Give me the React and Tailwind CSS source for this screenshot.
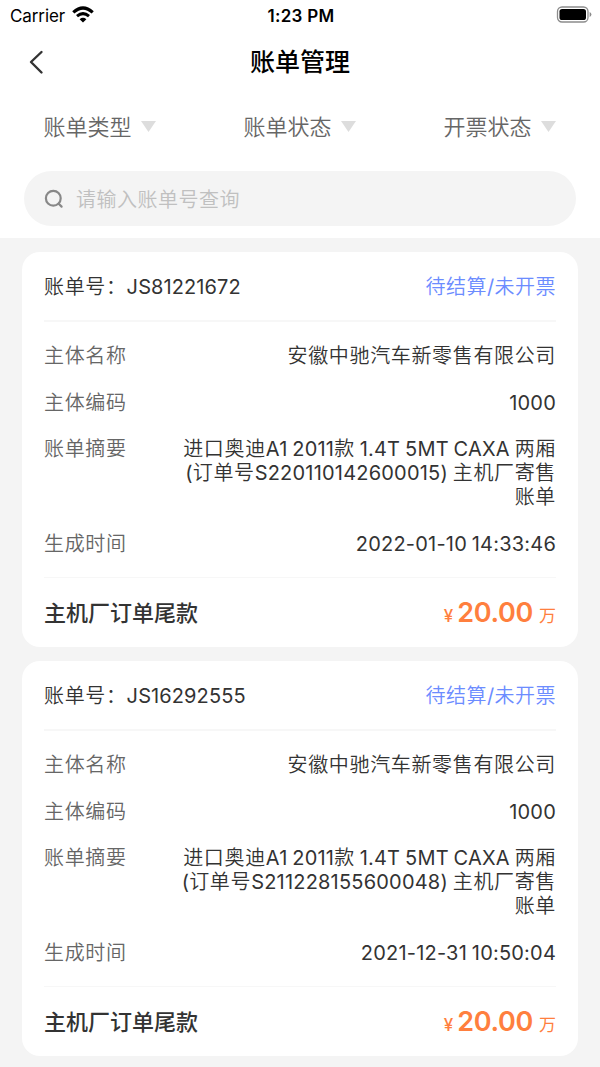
import React from 'react';

const filters = ['账单类型', '账单状态', '开票状态'];

const bills = [
  {
    no: 'JS81221672',
    status: '待结算/未开票',
    company: '安徽中驰汽车新零售有限公司',
    code: '1000',
    summary: ['进口奥迪A1 2011款 1.4T 5MT CAXA 两厢', '(订单号S220110142600015) 主机厂寄售', '账单'],
    time: '2022-01-10 14:33:46',
    name: '主机厂订单尾款',
    price: '20.00',
  },
  {
    no: 'JS16292555',
    status: '待结算/未开票',
    company: '安徽中驰汽车新零售有限公司',
    code: '1000',
    summary: ['进口奥迪A1 2011款 1.4T 5MT CAXA 两厢', '(订单号S211228155600048) 主机厂寄售', '账单'],
    time: '2021-12-31 10:50:04',
    name: '主机厂订单尾款',
    price: '20.00',
  },
];

function StatusBar() {
  return (
    <div className="grid h-[30px] grid-cols-3 items-center pl-[10px] pr-[8px] text-black">
      <div className="flex items-center gap-[7px]">
        <span className="pt-px text-[17px] leading-[30px] tracking-[-0.1px]">Carrier</span>
        <svg width="22" height="17" viewBox="0 0 22 17" className="-mt-[2px]">
          <path d="M11 16.6 L7.6 13.2 Q11 10.4 14.4 13.2 Z" fill="#000" />
          <path d="M5 10.2 Q11 5 17 10.2" fill="none" stroke="#000" strokeWidth="3" />
          <path d="M1.3 6.4 Q11 -2.4 20.7 6.4" fill="none" stroke="#000" strokeWidth="3.2" />
        </svg>
      </div>
      <div className="pt-px text-center text-[17px] font-semibold leading-[30px] tracking-[0.3px]">1:23 PM</div>
      <div className="flex justify-end">
        <svg width="36" height="18" viewBox="0 0 36 18" className="-mt-px">
          <rect x="1.5" y="1" width="30.5" height="15" rx="4.5" fill="none" stroke="#8c8c8c" strokeWidth="1.3" />
          <rect x="3.5" y="3" width="26.5" height="11" rx="2.6" fill="#000" />
          <path d="M33.6 6 Q35.4 6.8 35.4 8.5 Q35.4 10.2 33.6 11 Z" fill="#8c8c8c" />
        </svg>
      </div>
    </div>
  );
}

// latin runs are set tighter than the chinese text around them
function Mixed({ text }) {
  return text.split(/([\x20-\x7e]+)/).map((part, key) =>
    /^[\x20-\x7e]/.test(part) ? (
      <span key={key} className="font-normal tracking-[0.2px] [word-spacing:-1px]">
        {part}
      </span>
    ) : (
      part
    )
  );
}

function Row({ label, children }) {
  return (
    <div className="flex justify-between leading-[24px]">
      <div className="shrink-0 text-[#666]">{label}</div>
      <div className="whitespace-nowrap text-right text-[#333]">{children}</div>
    </div>
  );
}

function BillCard({ bill }) {
  return (
    <div className="rounded-[18px] bg-white px-[22px] text-[20px] font-[350] tracking-[0.65px] text-[#333]">
      <div className="flex h-[70px] items-center justify-between border-b-2 border-[#f7f7f7] pt-[2px]">
        <div className="flex">
          <span>账单号：</span>
          <span className="font-normal tracking-[0.1px]">{bill.no}</span>
        </div>
        <span className="tracking-[0.5px] text-[#6c8cff]">
          <Mixed text={bill.status} />
        </span>
      </div>
      <div className="flex h-[256px] flex-col gap-[22.5px] border-b border-[#f7f7f7] pt-[22px]">
        <Row label="主体名称">{bill.company}</Row>
        <Row label="主体编码">
          <Mixed text={bill.code} />
        </Row>
        <Row label="账单摘要">
          {bill.summary.map((line, key) => (
            <div key={key}>
              <Mixed text={line} />
            </div>
          ))}
        </Row>
        <Row label="生成时间">
          <Mixed text={bill.time} />
        </Row>
      </div>
      <div className="flex h-[69px] items-center justify-between pt-[2px]">
        <span className="text-[22px] font-medium tracking-normal">{bill.name}</span>
        <div className="flex items-baseline text-[#ff7f3e]">
          <span className="mr-[4px] text-[17px] font-medium tracking-normal">¥</span>
          <span className="text-[27px] font-semibold tracking-[-0.3px]">{bill.price}</span>
          <span className="ml-[6px] text-[17px] font-normal tracking-normal">万</span>
        </div>
      </div>
    </div>
  );
}

export default function App() {
  return (
    <div className="flex h-[1067px] w-[600px] flex-col overflow-hidden bg-[#f4f4f4] font-['Inter','Noto_Sans_CJK_SC',sans-serif]">
      <div className="h-[238px] shrink-0 bg-white">
        <StatusBar />
        <div className="grid h-[64px] grid-cols-3 items-center px-[28px]">
          <svg width="18" height="26" viewBox="0 0 18 26">
            <path d="M13.5 3 L3 13 L13.5 23.5" fill="none" stroke="#333" strokeWidth="2.4" strokeLinecap="round" strokeLinejoin="round" />
          </svg>
          <h1 className="pt-[2px] text-center text-[25px] font-medium text-black">账单管理</h1>
        </div>
        <div className="grid h-[64px] grid-cols-3">
          {filters.map((item) => (
            <div key={item} className="flex items-center pl-[43.5px] text-[22px] font-[350] text-[#666]">
              <span className="pt-[2px]">{item}</span>
              <svg width="15" height="11" viewBox="0 0 15 11" className="ml-[9px]">
                <path d="M0 0 H15 L7.5 11 Z" fill="#ddd" />
              </svg>
            </div>
          ))}
        </div>
        <div className="mx-[24px] mt-[13px] flex h-[55px] items-center rounded-full bg-[#f4f4f4] pl-[20px]">
          <svg width="20" height="20" viewBox="0 0 20 20">
            <circle cx="9.3" cy="9.3" r="7.4" fill="none" stroke="#888" strokeWidth="2.2" />
            <path d="M14.7 14.7 L17.6 17.6" stroke="#888" strokeWidth="2.2" strokeLinecap="round" />
          </svg>
          <span className="ml-[12px] pt-[2px] text-[20px] font-[350] tracking-[0.5px] text-[#c0c0c0]">请输入账单号查询</span>
        </div>
      </div>
      <div className="flex flex-col gap-[14px] px-[22px] pt-[14px]">
        {bills.map((bill) => (
          <BillCard key={bill.no} bill={bill} />
        ))}
      </div>
    </div>
  );
}
